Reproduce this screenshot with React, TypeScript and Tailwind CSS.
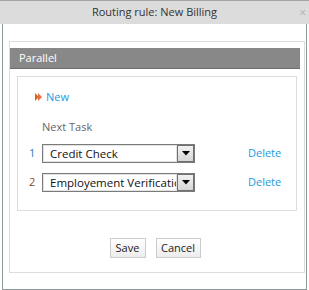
import React from "react";

function FakeSelect({ text }: { text: string }) {
  return (
    <div className="flex h-[19px] w-[153px] border border-[#7a7a7a] bg-white">
      <div className="flex-1 overflow-hidden whitespace-nowrap border border-[#e3e3e3] pl-[6px] text-[11.5px] leading-[15px] text-[#111]">
        {text}
      </div>
      <div className="flex w-[17px] items-center justify-center border border-[#6f6f6f] bg-gradient-to-b from-[#f2f2f2] to-[#d6d6d6]">
        <svg width="8" height="5" viewBox="0 0 8 5">
          <path d="M0 0 H8 L4 4.5 Z" fill="#000" />
        </svg>
      </div>
    </div>
  );
}

export default function App() {
  return (
    <div
      className="relative h-[290px] w-[309px] overflow-hidden bg-white"
      style={{ fontFamily: '"Open Sans", "DejaVu Sans", sans-serif' }}
    >
      <div className="relative flex h-[24px] items-center justify-center border-t border-[#a3a3a3] bg-[#dcdcdc] text-[11px] text-[#333]">
        Routing rule: New Billing
        <span className="absolute right-[3px] top-[3px] text-[12px] text-[#b0b0b0]">×</span>
      </div>
      <div className="mx-[2px] h-[266px] border border-t-0 border-[#8e9999] pt-[17px]">
        <div className="ml-[6px] mr-[1px] h-[232px] border border-[#dddddd] pr-[4px] pt-[6px]">
          <div className="flex h-[21px] items-center border-b border-[#6e6e6e] bg-[#888888] pl-[9px] text-[11px] text-white">
            Parallel
          </div>
          <div className="ml-[7px] mr-[3px] mt-[7px] h-[135px] border border-[#dddddd] pt-[12px]">
            <div className="flex items-center pl-[17px] text-[11px]">
              <svg width="7" height="8" viewBox="0 0 7 8" className="mr-[4px]">
                <path d="M0 0 L4 4 L0 8 Z" fill="#e0612f" />
                <path d="M3 0 L7 4 L3 8 Z" fill="#e8703a" />
              </svg>
              <span className="text-[#1a9ae0]">New</span>
            </div>
            <div className="mt-[13px] pl-[24px] text-[11px] text-[#666]">Next Task</div>
            <div className="mt-[9px] flex items-center text-[11px]">
              <span className="w-[24px] pl-[11px] text-[#2b7bc0]">1</span>
              <FakeSelect text="Credit Check" />
              <span className="ml-[53px] text-[#1a9ae0]">Delete</span>
            </div>
            <div className="mt-[10px] flex items-center text-[11px]">
              <span className="w-[24px] pl-[11px] text-[#8a4a1a]">2</span>
              <FakeSelect text="Employement Verification" />
              <span className="ml-[53px] text-[#1a9ae0]">Delete</span>
            </div>
          </div>
          <div className="mt-[27px] flex justify-center gap-[10px]">
            <button className="h-[20px] w-[36px] border border-[#cccccc] bg-gradient-to-b from-white to-[#ececec] text-[11px] text-[#222]">
              Save
            </button>
            <button className="h-[20px] w-[45px] border border-[#cccccc] bg-gradient-to-b from-white to-[#ececec] text-[11px] text-[#222]">
              Cancel
            </button>
          </div>
        </div>
      </div>
    </div>
  );
}
